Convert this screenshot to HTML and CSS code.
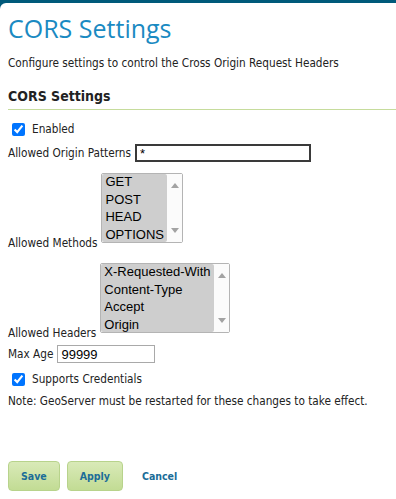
FILE: index.html
```html
<!DOCTYPE html>
<html lang="en">
<head>
    <meta charset="UTF-8">
    <title>CORS Settings</title>
    <link rel="stylesheet" href="styles.css">
</head>
<body>
    <div class="page">
        <h1>CORS Settings</h1>
        <p class="desc">Configure settings to control the Cross Origin Request Headers</p>

        <h3>CORS Settings</h3>

        <ul class="fields">
            <li class="check">
                <input type="checkbox" id="enabled" checked>
                <label for="enabled">Enabled</label>
            </li>
            <li class="field origin-row">
                <label for="origins">Allowed Origin Patterns</label>
                <input type="text" id="origins" class="origins" value="*">
            </li>
            <li class="list-row methods-row">
                <label for="methods">Allowed Methods</label>
                <span class="listbox">
                    <select id="methods" class="methods" multiple size="4">
                        <option selected>GET</option>
                        <option selected>POST</option>
                        <option selected>HEAD</option>
                        <option selected>OPTIONS</option>
                        <option>PUT</option>
                        <option>DELETE</option>
                        <option>PATCH</option>
                    </select>
                    <span class="scrollbar"><i class="arrow up"></i><i class="arrow down"></i></span>
                </span>
            </li>
            <li class="list-row headers-row">
                <label for="headers">Allowed Headers</label>
                <span class="listbox">
                    <select id="headers" class="headers" multiple size="4">
                        <option selected>X-Requested-With</option>
                        <option selected>Content-Type</option>
                        <option selected>Accept</option>
                        <option selected>Origin</option>
                        <option>Authorization</option>
                    </select>
                    <span class="scrollbar"><i class="arrow up"></i><i class="arrow down"></i></span>
                </span>
            </li>
            <li class="field age-row">
                <label for="maxage">Max Age</label>
                <input type="text" id="maxage" class="maxage" value="99999">
            </li>
            <li class="check credentials-row">
                <input type="checkbox" id="credentials" checked>
                <label for="credentials">Supports Credentials</label>
            </li>
            <li class="note">Note: GeoServer must be restarted for these changes to take effect.</li>
        </ul>

        <div class="buttons">
            <button class="btn">Save</button>
            <button class="btn">Apply</button>
            <a href="#" class="cancel">Cancel</a>
        </div>
    </div>
</body>
</html>
```

FILE: styles.css
```css
body {
    margin: 0;
    background-color: #005a7a;
    font-family: "DejaVu Sans Condensed", "DejaVu Sans", Tahoma, sans-serif;
    font-size: 11.7px;
    color: #222;
}

.page {
    margin-top: 3px;
    min-height: 496px;
    background-color: #fff;
    border-top-left-radius: 6px;
    padding: 0 0 0 8px;
    box-sizing: border-box;
}

h1 {
    margin: 0;
    padding-top: 8px;
    font-family: "Open Sans", sans-serif;
    font-size: 25px;
    font-weight: normal;
    color: #1a8ac2;
    line-height: 34px;
}

.desc {
    margin: 10px 0 0 0;
    line-height: 16px;
}

h3 {
    margin: 17px 0 0 0;
    padding-bottom: 4px;
    font-size: 14px;
    line-height: 17px;
    color: #222;
    border-bottom: 1px solid #c6dc9c;
}

/* Form rows */
.fields {
    list-style: none;
    margin: 11px 0 0 0;
    padding: 0;
    line-height: 16px;
}

.check,
.field {
    display: flex;
    align-items: center;
}

.field {
    gap: 4px;
}

.check input {
    margin: 0 7px 0 4px;
    width: 13px;
    height: 13px;
}

.origin-row {
    margin-top: 7px;
}

.list-row {
    display: flex;
    align-items: flex-end;
    gap: 4px;
}

.list-row label {
    margin-bottom: -8px;
}

.methods-row {
    margin-top: 11px;
}

.headers-row {
    margin-top: 20px;
}

.age-row {
    margin-top: 12px;
}

.credentials-row {
    margin-top: 8px;
}

.note {
    margin-top: 6px;
}

input[type="text"] {
    font-family: "Liberation Sans", Arial, sans-serif;
    font-size: 13px;
    height: 18px;
    box-sizing: border-box;
    padding: 0 3px;
    margin: 0;
    border: 1px solid #a9a9a9;
}

.origins {
    width: 176px;
    border: 2px solid #3a3a3a !important;
}

.maxage {
    width: 98px;
}

/* List boxes with their scrollbar */
.listbox {
    display: inline-flex;
    height: 70px;
    box-sizing: border-box;
    border: 1px solid #b4b4b4;
    border-radius: 2px;
    background-color: #fff;
}

select {
    font-family: "Liberation Sans", Arial, sans-serif;
    font-size: 13px;
    border: none;
    outline: none;
    padding: 0;
    margin: 0;
    height: 68px;
    overflow: hidden;
}

select option {
    padding: 0 2px 2px 3px;
    line-height: 15px;
}

select option:checked {
    background-color: #cecece;
    color: #000;
}

.methods {
    width: 65px;
}

.headers {
    width: 113px;
}

.scrollbar {
    width: 15px;
    padding: 4px 0;
    display: flex;
    flex-direction: column;
    justify-content: space-between;
    align-items: center;
    background-color: #fbfbfb;
}

.arrow {
    display: flex;
    width: 15px;
    height: 15px;
    align-items: center;
    justify-content: center;
}

.arrow::before {
    content: "";
    border-left: 4px solid transparent;
    border-right: 4px solid transparent;
}

.arrow.up::before {
    border-bottom: 5px solid #a3a3a3;
}

.arrow.down::before {
    border-top: 5px solid #a3a3a3;
}

/* Buttons */
.buttons {
    margin-top: 52px;
    display: flex;
    align-items: center;
    gap: 7px;
}

.btn {
    font-family: "DejaVu Sans Condensed", "DejaVu Sans", Tahoma, sans-serif;
    font-size: 10.5px;
    font-weight: bold;
    color: #1b6d98;
    background: linear-gradient(#d9eab8, #c2dc94);
    border: 1px solid #b8d38c;
    border-radius: 4px;
    height: 30px;
    padding: 0 12px;
}

.cancel {
    margin-left: 12px;
    font-size: 10.5px;
    font-weight: bold;
    color: #1b6d98;
    text-decoration: none;
}
```
